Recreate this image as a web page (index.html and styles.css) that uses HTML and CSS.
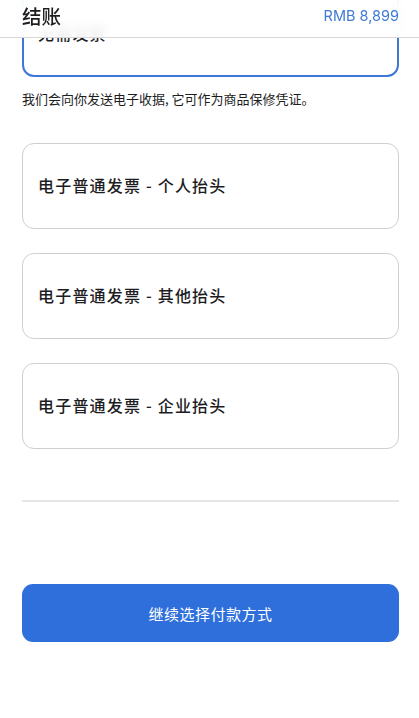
FILE: index.html
```html
<!DOCTYPE html>
<html lang="zh-CN">
<head>
    <meta charset="UTF-8">
    <meta name="viewport" content="width=device-width, user-scalable=no">
    <title>结账</title>
    <link rel="stylesheet" href="styles.css">
</head>
<body>

<!--顶部栏-->
<div class="header">
    <h1 class="title">结账</h1>
    <span class="price">RMB 8,899</span>
</div>

<div class="main">
    <!--发票选项-->
    <ul class="options">
        <li class="current">无需发票</li>
    </ul>
    <p class="tip">我们会向你发送电子收据, 它可作为商品保修凭证。</p>

    <ul class="options list">
        <li>电子普通发票 - 个人抬头</li>
        <li>电子普通发票 - 其他抬头</li>
        <li>电子普通发票 - 企业抬头</li>
    </ul>

    <span class="line"></span>

    <a href="#" class="next">继续选择付款方式</a>
</div>

</body>
</html>
```

FILE: styles.css
```css
* {
    margin: 0;
    padding: 0;
    list-style: none;
    box-sizing: border-box;
}

body {
    background-color: #fff;
    color: #1d1d1f;
    font-family: "Noto Sans CJK SC", "Noto Sans", sans-serif;
}

/*顶部栏*/
.header {
    position: fixed;
    left: 0;
    top: 0;
    width: 100%;
    height: 38px;
    padding: 0 20px 0 22px;

    display: flex;
    justify-content: space-between;
    align-items: center;

    background-color: rgba(255, 255, 255, 0.9);
    backdrop-filter: blur(6px);
    border-bottom: 1px solid #d6d6d6;
    z-index: 10;
}

.title {
    font-size: 19.5px;
    font-weight: 500;
    line-height: 1;
    margin-top: -6px;
}

.price {
    font-family: "Inter", "Noto Sans", sans-serif;
    font-size: 14.5px;
    color: #3f7bd3;
    margin-top: -6px;
}

.main {
    margin-top: -9px;
    padding: 0 20px 0 22px;
}

/*选项卡片*/
.options li {
    height: 86px;
    padding: 0 0 3px 15px;

    display: flex;
    align-items: center;

    border: 1px solid #cfcfcf;
    border-radius: 12px;

    font-size: 16px;
    font-weight: 500;
    letter-spacing: 1.2px;
}

.options li.current {
    border: 2px solid #3d78d8;
    padding-left: 14px;
}

.list {
    display: flex;
    flex-direction: column;
    gap: 24px;
    margin-top: 34px;
}

.tip {
    margin-top: 12px;
    font-size: 13px;
    line-height: 20px;
    color: #1d1d1f;
}

.line {
    display: block;
    height: 2px;
    margin-top: 51px;
    background-color: #e6e6e6;
}

.next {
    margin-top: 82px;
    height: 58px;

    display: flex;
    justify-content: center;
    align-items: center;

    background-color: #2e6fdb;
    border-radius: 11px;

    color: #fff;
    font-size: 15px;
    letter-spacing: 0.5px;
    text-decoration: none;
}
```
